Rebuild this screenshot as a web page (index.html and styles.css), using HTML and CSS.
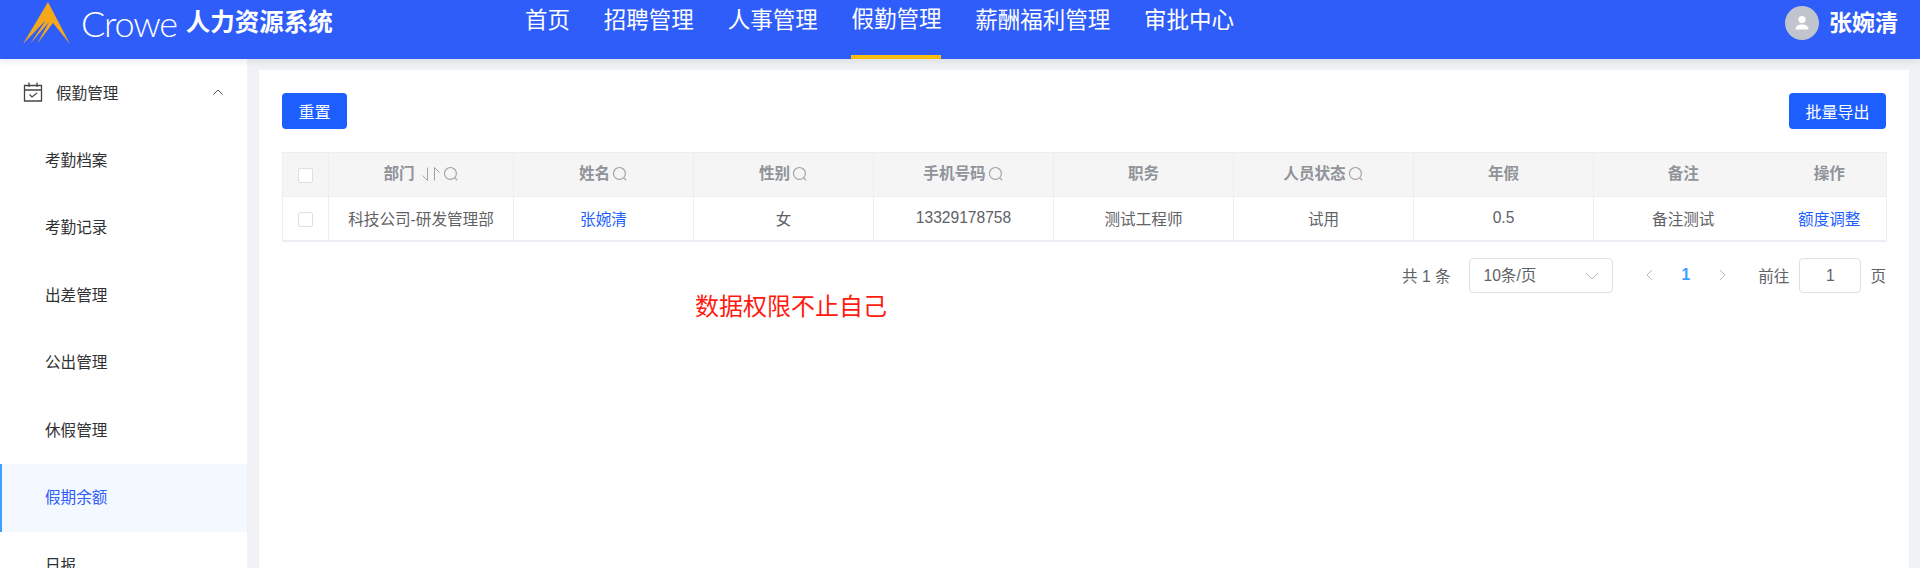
FILE: index.html
```html
<!DOCTYPE html>
<html lang="zh-CN">
<head>
<meta charset="utf-8">
<title>人力资源系统</title>
<link rel="stylesheet" href="styles.css">
</head>
<body>
<svg class="defs" width="0" height="0" aria-hidden="true">
  <symbol id="search" viewBox="0 0 14 14"><circle cx="6.5" cy="6.5" r="5.2" fill="none" stroke="currentColor" stroke-width="1"/><path d="M10.2 10.2 12.4 12.6" fill="none" stroke="currentColor" stroke-width="1"/></symbol>
  <symbol id="sort" viewBox="0 0 20 16"><path d="M6.500 1.500V14.500L1.500 9.500M13.500 14.500V1.500L18.500 6.500" fill="none" stroke="currentColor" stroke-width="1"/></symbol>
</svg>
<header class="topbar">
  <div class="brand">
    <svg class="logo" viewBox="0 0 47 42" aria-hidden="true"><path fill="#f5a81c" d="M25 0 47 42 30 21 14 42 26 20 7 42 23 18 0 42Z"/></svg>
    <span class="crowe">Crowe</span>
    <span class="system">人力资源系统</span>
  </div>
  <nav class="nav">
    <a class="nav-item">首页</a>
    <a class="nav-item">招聘管理</a>
    <a class="nav-item">人事管理</a>
    <a class="nav-item nav-active">假勤管理</a>
    <a class="nav-item">薪酬福利管理</a>
    <a class="nav-item">审批中心</a>
  </nav>
  <div class="user">
    <span class="avatar"><svg viewBox="0 0 34 34" width="34" height="34" aria-hidden="true"><circle cx="17" cy="13.500" r="3.600" fill="#fff"/><path fill="#fff" d="M10.500 23.500c0-3.400 2.600-5 6.500-5s6.500 1.600 6.500 5z"/></svg></span>
    <span class="user-name">张婉清</span>
  </div>
</header>
<div class="layout">
  <aside class="sidebar">
    <div class="menu-title">
      <svg class="cal" viewBox="0 0 20 20" aria-hidden="true"><path fill="none" stroke="#444" stroke-width="1.300" d="M1.500 3.500H18.500V19H1.500ZM1.500 8H18.500M6 .5V5M14 .5V5"/><path fill="none" stroke="#444" stroke-width="1.200" d="M6.500 12.500 9 15 14 11"/></svg>
      <span>假勤管理</span>
      <svg class="chev" viewBox="0 0 10 6" aria-hidden="true"><path fill="none" stroke="#555" stroke-width="1" d="M.5 5.500 5 1l4.500 4.500"/></svg>
    </div>
    <a class="menu-item">考勤档案</a>
    <a class="menu-item">考勤记录</a>
    <a class="menu-item">出差管理</a>
    <a class="menu-item">公出管理</a>
    <a class="menu-item">休假管理</a>
    <a class="menu-item menu-active">假期余额</a>
    <a class="menu-item">日报</a>
  </aside>
  <main class="main">
    <section class="card">
      <div class="toolbar">
        <button class="btn btn-reset">重置</button>
        <button class="btn btn-export">批量导出</button>
      </div>
      <table class="grid">
        <colgroup>
          <col class="c-check"><col class="c-dept"><col class="c-w"><col class="c-w"><col class="c-w"><col class="c-w"><col class="c-w"><col class="c-w"><col class="c-note"><col class="c-op">
        </colgroup>
        <thead>
          <tr>
            <th><span class="check"></span></th>
            <th><span class="th-in">部门<svg class="ic-sort"><use href="#sort"/></svg><svg class="ic-search ic-after-sort"><use href="#search"/></svg></span></th>
            <th><span class="th-in">姓名<svg class="ic-search"><use href="#search"/></svg></span></th>
            <th><span class="th-in">性别<svg class="ic-search"><use href="#search"/></svg></span></th>
            <th><span class="th-in">手机号码<svg class="ic-search"><use href="#search"/></svg></span></th>
            <th><span class="th-in">职务</span></th>
            <th><span class="th-in">人员状态<svg class="ic-search"><use href="#search"/></svg></span></th>
            <th><span class="th-in">年假</span></th>
            <th class="no-right"><span class="th-in">备注</span></th>
            <th><span class="th-in">操作</span></th>
          </tr>
        </thead>
        <tbody>
          <tr>
            <td><span class="check"></span></td>
            <td>科技公司-研发管理部</td>
            <td><a class="link">张婉清</a></td>
            <td>女</td>
            <td>13329178758</td>
            <td>测试工程师</td>
            <td>试用</td>
            <td>0.5</td>
            <td class="no-right">备注测试</td>
            <td><a class="link">额度调整</a></td>
          </tr>
        </tbody>
      </table>
      <div class="pager">
        <span class="total">共 1 条</span>
        <span class="select">10条/页<svg class="select-arrow" viewBox="0 0 14 8" aria-hidden="true"><path fill="none" stroke="#b4b8c0" stroke-width="1" d="M1 1l6 6 6-6"/></svg></span>
        <svg class="page-arrow page-prev" viewBox="0 0 7 12" aria-hidden="true"><path fill="none" stroke="#bbb" stroke-width="1" d="M6 1 1 6l5 5"/></svg>
        <span class="page-num">1</span>
        <svg class="page-arrow page-next" viewBox="0 0 7 12" aria-hidden="true"><path fill="none" stroke="#bbb" stroke-width="1" d="m1 1 5 5-5 5"/></svg>
        <span class="goto">前往</span>
        <span class="page-input">1</span>
        <span class="unit">页</span>
      </div>
      <p class="note">数据权限不止自己</p>
    </section>
  </main>
</div>
</body>
</html>
```
FILE: styles.css
```css
* { box-sizing: border-box; }
html, body { margin: 0; height: 568px; overflow: hidden; }
body {
  display: flex;
  flex-direction: column;
  background: #f0f2f5;
  font-family: "Liberation Sans", "Noto Sans CJK SC", sans-serif;
  font-size: 15.6px;
  color: #606266;
}
.defs { position: absolute; }

.topbar {
  position: relative;
  z-index: 2;
  flex: none;
  display: flex;
  height: 59px;
  padding-left: 23px;
  background: #2f5dfa;
  color: #fff;
  box-shadow: 0 2px 8px rgba(0, 21, 41, .1);
}
.brand { display: flex; align-items: flex-start; width: 502px; }
.logo { width: 47px; height: 42px; margin-top: 2px; }
.crowe {
  margin-left: 11px;
  font-family: "Lato", sans-serif;
  font-weight: 300;
  font-size: 36px;
  line-height: 46px;
  letter-spacing: -1.2px;
}
.system { margin-left: 9px; font-size: 24.5px; font-weight: 700; line-height: 46px; }
.nav { display: flex; gap: 33.8px; }
.nav-item { height: 59px; font-size: 22.5px; line-height: 42px; }
.nav-active { line-height: 40px; border-bottom: 4px solid #f9bd0b; }
.user { display: flex; align-items: flex-start; margin-left: auto; padding: 6px 22px 0 0; }
.avatar { width: 34px; height: 34px; border-radius: 50%; background: #c0c4cc; }
.avatar svg { display: block; }
.user-name { margin-left: 10px; font-size: 23px; font-weight: 700; line-height: 34px; }

.layout { flex: 1; display: flex; min-height: 0; }
.sidebar { flex: none; width: 247px; overflow: hidden; background: #fff; color: #303133; }
.menu-title {
  display: flex;
  align-items: center;
  height: 67.5px;
  padding: 0 24px 2px 23px;
}
.cal { width: 20px; height: 20px; flex: none; }
.menu-title span { margin-left: 13px; flex: 1; }
.chev { width: 10px; height: 6px; flex: none; }
.menu-item { display: block; height: 67.5px; padding-left: 45px; line-height: 67.5px; }
.menu-active { padding-left: 43px; border-left: 2px solid #409eff; background: #f4f8ff; color: #2f5dfa; }

.main { flex: 1; min-width: 0; padding: 11px 11px 0 12px; }
.card { height: 100%; padding: 23px 23px 0; background: #fff; }
.toolbar { display: flex; justify-content: space-between; }
.btn {
  height: 36px;
  padding: 0;
  border: 0;
  border-radius: 4px;
  background: #1d5ffe;
  color: #fff;
  font: inherit;
  font-size: 16px;
}
.btn-reset { width: 65px; }
.btn-export { width: 97px; }

.grid {
  width: 1604px;
  margin-top: 23px;
  table-layout: fixed;
  border-collapse: collapse;
  border-top: 1px solid #ebeef5;
  border-left: 1px solid #ebeef5;
  border-bottom: 2px solid #ebeef5;
  text-align: center;
}
.c-check { width: 46px; }
.c-dept { width: 185px; }
.c-w { width: 180px; }
.c-note { width: 179px; }
.c-op { width: 114px; }
.grid th, .grid td { padding: 0; border-right: 1px solid #ebeef5; }
.grid th.no-right, .grid td.no-right { border-right: 0; }
.grid th {
  height: 44px;
  background: #f5f5f5;
  border-bottom: 1px solid #ebeef5;
  color: #909399;
  font-weight: 700;
}
.th-in { display: inline-block; margin-bottom: 5px; }
.grid td { height: 44px; }
.check {
  display: inline-block;
  width: 15px;
  height: 15px;
  border: 1px solid #dcdfe6;
  border-radius: 2px;
  background: #fff;
  vertical-align: middle;
}
.ic-search { width: 16px; height: 16px; margin-left: 2px; color: #a3a3a3; vertical-align: -3px; }
.ic-after-sort { margin-left: 2px; }
.ic-sort { width: 20px; height: 16px; margin-left: 6px; color: #a3a3a3; vertical-align: -3px; }
.link { color: #1d5ffe; }

.pager { display: flex; align-items: center; justify-content: flex-end; height: 35px; margin-top: 16px; }
.select {
  position: relative;
  width: 144px;
  height: 35px;
  margin-left: 18px;
  padding-left: 14px;
  border: 1px solid #dcdfe6;
  border-radius: 4px;
  line-height: 33px;
}
.select-arrow { position: absolute; right: 13px; top: 13px; width: 14px; height: 8px; }
.page-arrow { width: 7px; height: 12px; }
.page-prev { margin-left: 33px; }
.page-num { margin: 0 29px; color: #409eff; font-weight: 700; }
.goto { margin-left: 32px; }
.page-input {
  width: 62px;
  height: 35px;
  margin: 0 9px 0 10px;
  border: 1px solid #dcdfe6;
  border-radius: 4px;
  line-height: 33px;
  text-align: center;
}
.note {
  margin: -3px 0 0 413px;
  color: #ff1a0f;
  font-size: 24px;
  line-height: 34px;
}
```
